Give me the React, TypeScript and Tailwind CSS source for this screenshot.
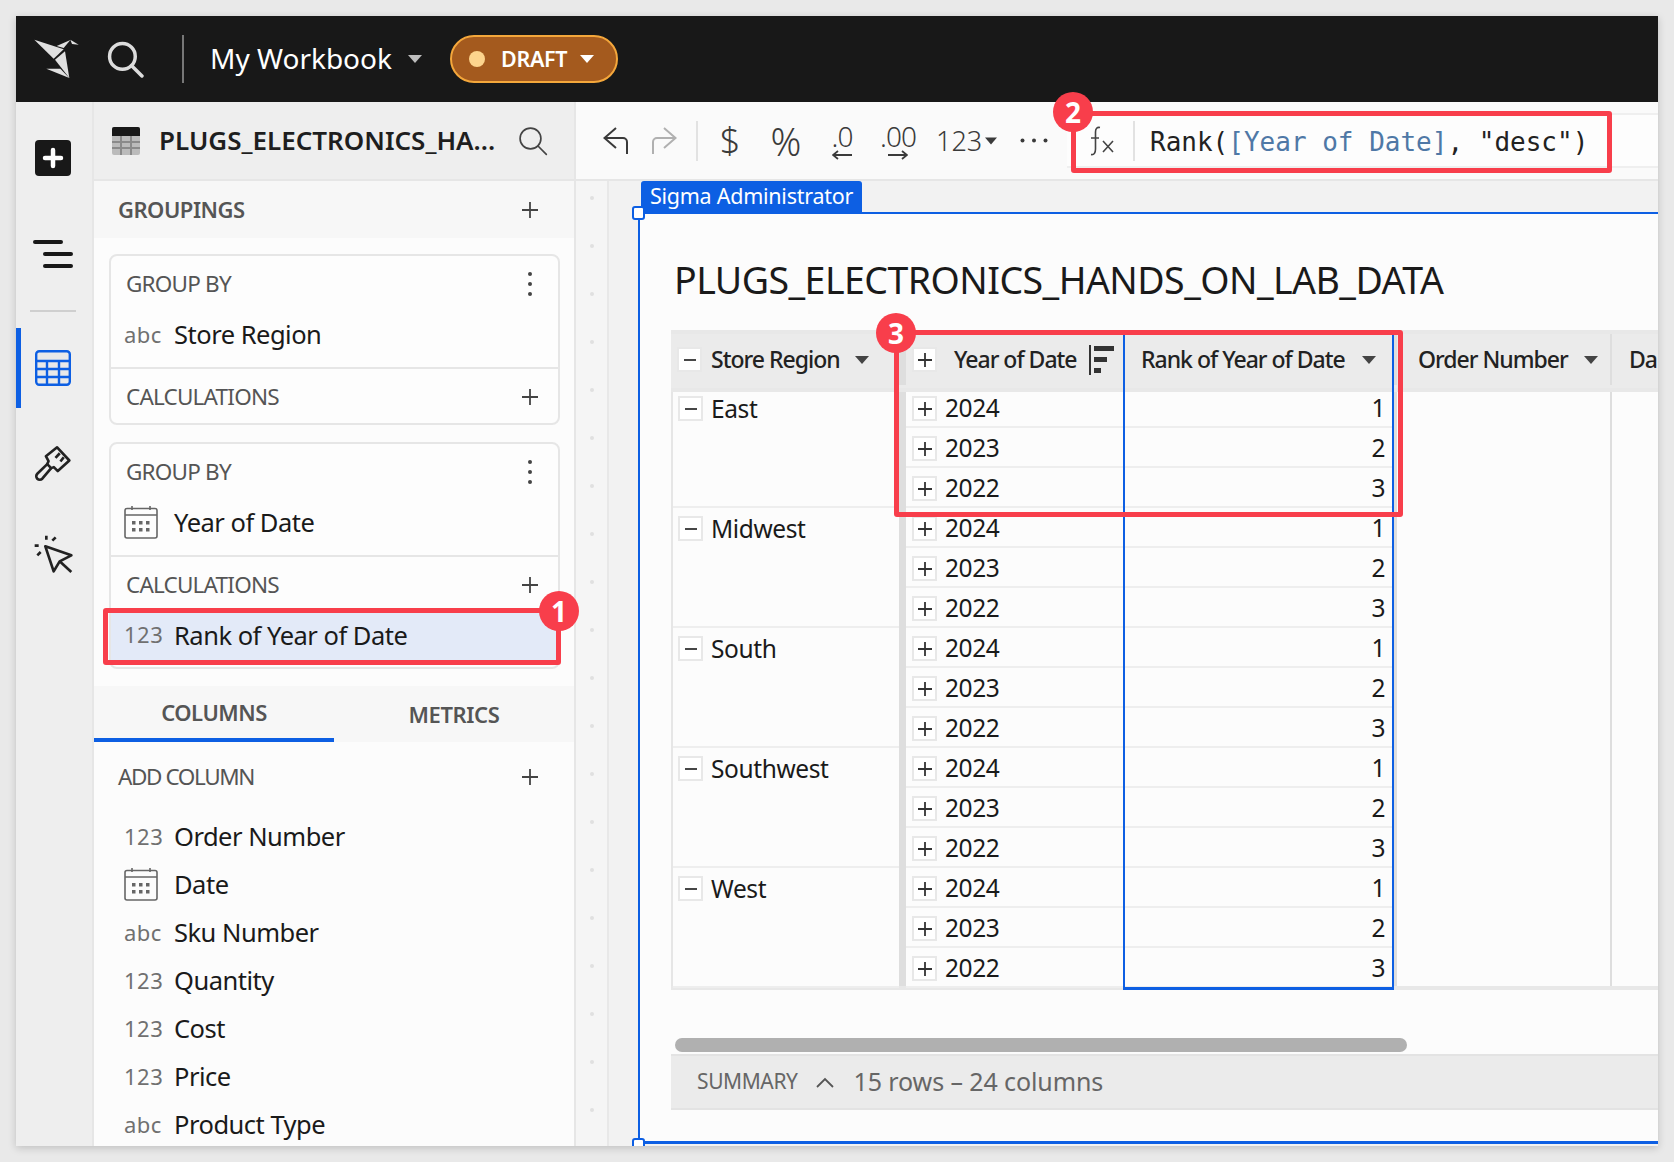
import React from "react";

const Plus = ({ c = "#444", s = 20 }: { c?: string; s?: number }) => (
  <svg width={s} height={s} viewBox="0 0 20 20" fill="none" stroke={c} strokeWidth="1.8"><path d="M10 2v16M2 10h16" /></svg>
);
const Caret = ({ c = "#444", w = 14 }: { c?: string; w?: number }) => (
  <svg width={w} height={8} viewBox="0 0 14 8" fill={c}><path d="M0 0h14L7 8z" /></svg>
);
const Dots = () => (
  <div className="flex w-[20px] justify-center">
    <svg width="6" height="26" viewBox="0 0 6 26" fill="#444"><circle cx="3" cy="3" r="2" /><circle cx="3" cy="13" r="2" /><circle cx="3" cy="23" r="2" /></svg>
  </div>
);
const Calendar = () => (
  <svg width="34" height="34" viewBox="0 0 34 34" fill="none" stroke="#666" strokeWidth="1.6">
    <rect x="1" y="3.5" width="32" height="29.5" rx="2" />
    <path d="M1 10h32M8 1v4M26 1v4" />
    <g fill="#666" stroke="none">
      <rect x="8" y="16" width="3.5" height="3.5" /><rect x="15" y="16" width="3.5" height="3.5" /><rect x="22" y="16" width="3.5" height="3.5" />
      <rect x="8" y="23" width="3.5" height="3.5" /><rect x="15" y="23" width="3.5" height="3.5" /><rect x="22" y="23" width="3.5" height="3.5" />
    </g>
  </svg>
);
const Logo = () => (
  <svg width="50" height="44" viewBox="20 25 150 132" fill="#e0e0e0">
    <polygon points="30,33 118,62 88,90" />
    <polygon points="97,52 138,34 118,58" />
    <polygon points="138,33 163,48 143,46" />
    <polygon points="92,93 122,68 135,148" />
    <polygon points="66,120 108,120 135,148" />
  </svg>
);
const Search = ({ c, w, s }: { c: string; w: number; s: number }) => (
  <svg width={s} height={s} viewBox="0 0 36 36" fill="none" stroke={c} strokeWidth={w} strokeLinecap="round">
    <circle cx="15" cy="15" r="12.5" /><path d="M24 24l10 10" />
  </svg>
);
const Brush = () => (
  <svg width="38" height="38" viewBox="40 315 115 115" fill="none" stroke="#222" strokeWidth="8" strokeLinejoin="round">
    <path d="M110 325 L147 365 L112 397 L100 385 L92 388 L80 376 L84 367 L76 352 Z" />
    <path d="M80 376 L50 405 a10 10 0 0 0 15 15 L92 388" />
    <path d="M118 343 L105 357 M130 355 L120 368" />
  </svg>
);
const CursorClick = () => (
  <svg width="40" height="40" viewBox="35 598 120 120" fill="none" stroke="#222" strokeWidth="8">
    <path d="M72 635 L150 662 L115 680 L97 710 Z" strokeLinejoin="round" />
    <path d="M115 680 L150 712" />
    <path d="M75 603 V615 M40 633 H52 M48 662 L58 652 M103 608 L93 618" />
  </svg>
);
const TableIcon = () => (
  <svg width="36" height="36" viewBox="0 0 36 36">
    <rect x="1.2" y="1.2" width="33.6" height="33.6" rx="3" fill="#e9e9e9" stroke="#0d5fe3" strokeWidth="2.4" />
    <path d="M1 11h34M1 19h34M1 27h34M12 11v24M24 11v24" stroke="#0d5fe3" strokeWidth="2.4" />
  </svg>
);
const PanelTable = () => (
  <svg width="28" height="28" viewBox="0 0 28 28">
    <rect width="28" height="28" rx="2" fill="#bbb" />
    <path d="M0 2a2 2 0 0 1 2-2h24a2 2 0 0 1 2 2v7H0z" fill="#181818" />
    <path d="M0 15h28M0 21h28M9 9v19M19 9v19" stroke="#8a8a8a" strokeWidth="2" />
  </svg>
);
const Undo = ({ c, flip }: { c: string; flip?: boolean }) => (
  <svg width="26" height="28" viewBox="0 0 26 28" fill="none" stroke={c} strokeWidth="2" className={flip ? "-scale-x-100" : ""}>
    <path d="M13 1L1.5 11 13 21M1.5 11H20a4 4 0 0 1 4 4v12" />
  </svg>
);
const Fx = () => (
  <svg width="26" height="30" viewBox="0 0 26 30" fill="none" stroke="#444" strokeWidth="1.6">
    <path d="M11 1.5C8 1 6.5 2.5 6.5 6V23C6.5 27 5 29 2 28.5M2 12H10" />
    <path d="M14 15L24 26M24 15L14 26" />
  </svg>
);
const Badge = ({ n, cls }: { n: number; cls: string }) => (
  <div className={"absolute z-30 flex h-[40px] w-[40px] items-center justify-center rounded-full bg-[#f83e4b] text-[28px] font-bold leading-none text-white " + cls}>{n}</div>
);
const RedBox = ({ cls }: { cls: string }) => (
  <div className={"absolute z-20 rounded-[3px] border-[5px] border-[#f83e4b] " + cls} />
);
const Box = ({ minus }: { minus?: boolean }) => (
  <div className="flex h-[25px] w-[25px] shrink-0 items-center justify-center border-2 border-[#e8e8e8] bg-white">
    <svg width="14" height="14" viewBox="0 0 14 14" stroke="#333" strokeWidth="1.8"><path d={minus ? "M1 7h12" : "M7 0v14M0 7h14"} /></svg>
  </div>
);
const Item = ({ t, label, card }: { t: string; label: string; card?: boolean }) => (
  <div className="flex h-[48px] items-center">
    <div className={card ? "flex w-[63px] pl-[13px]" : "flex w-[80px] pl-[30px]"}>
      {t === "cal" ? <Calendar /> : <span className="text-[22px] tracking-[0.5px] text-[#707070]">{t}</span>}
    </div>
    <span className="text-[25.5px] tracking-[-0.5px] text-[#1a1a1a]">{label}</span>
  </div>
);
const SecHead = ({ label, icon }: { label: string; icon: React.ReactNode }) => (
  <div className="flex items-center justify-between pr-[18px]">
    <span className="text-[22.5px] tracking-[-0.8px] text-[#555]">{label}</span>
    {icon}
  </div>
);

const years = ["2024", "2023", "2022"];
const regions = ["East", "Midwest", "South", "Southwest", "West"];

export default function App() {
  return (
    <div className="relative h-[1162px] w-[1674px] overflow-hidden bg-[#e9e9e9] p-[16px] font-['Noto_Sans',sans-serif]">
      <div className="flex h-[1130px] w-[1642px] flex-col overflow-hidden bg-white shadow-[0_2px_8px_rgba(0,0,0,0.18)]">
        {/* top bar */}
        <div className="flex h-[86px] shrink-0 items-center bg-[#181818] pl-[15px]">
          <Logo />
          <div className="ml-[26px]"><Search c="#dcdcdc" w={3.4} s={37} /></div>
          <div className="ml-[38px] h-[48px] w-[2px] bg-[#777]" />
          <span className="ml-[26px] pb-[2px] text-[28px] leading-none text-white">My Workbook</span>
          <div className="ml-[16px]"><Caret c="#bdbdbd" /></div>
          <div className="ml-[28px] flex h-[48px] w-[168px] items-center rounded-full border-2 border-[#f4a73b] bg-[#a45a1e] pl-[17px]">
            <div className="h-[16px] w-[16px] rounded-full bg-[#fdd48d]" />
            <span className="ml-[16px] text-[21.5px] font-semibold tracking-[-0.3px] text-white">DRAFT</span>
            <div className="ml-[13px]"><Caret c="#fff" /></div>
          </div>
        </div>

        <div className="flex min-h-0 flex-1">
          {/* rail */}
          <div className="flex w-[78px] shrink-0 flex-col items-center border-r-2 border-[#e6e6e6] bg-[#eeeeee] pr-[2px]">
            <div className="mt-[38px] flex h-[36px] w-[36px] items-center justify-center rounded-[4px] bg-[#181818]">
              <svg width="22" height="22" viewBox="0 0 22 22" stroke="#fff" strokeWidth="4.5" strokeLinecap="round"><path d="M11 3v16M3 11h16" /></svg>
            </div>
            <div className="mt-[64px] flex flex-col items-start gap-[8px]">
              <div className="h-[4px] w-[30px] rounded-full bg-[#181818]" />
              <div className="ml-[10px] h-[4px] w-[30px] rounded-full bg-[#181818]" />
              <div className="ml-[10px] h-[4px] w-[30px] rounded-full bg-[#181818]" />
            </div>
            <div className="mt-[42px] h-[2px] w-[46px] bg-[#cfcfcf]" />
            <div className="mt-[16px] flex h-[80px] w-[76px] items-center justify-center border-l-[6px] border-[#0d5fe3] pr-[6px]"><TableIcon /></div>
            <div className="mt-[36px] flex"><Brush /></div>
            <div className="mt-[52px] flex"><CursorClick /></div>
          </div>

          {/* panel */}
          <div className="flex w-[482px] shrink-0 flex-col overflow-hidden border-r-2 border-[#e6e6e6] bg-[#fcfcfc]">
            <div className="flex h-[79px] shrink-0 items-center border-b-2 border-[#e6e6e6] bg-[#eeeeee] pl-[18px]">
              <PanelTable />
              <span className="ml-[19px] w-[349px] text-[26px] font-semibold whitespace-nowrap text-[#1e1e1e]">PLUGS_ELECTRONICS_HA...</span>
              <div className="ml-[10px]"><Search c="#444" w={2} s={30} /></div>
            </div>
            <div className="flex h-[57px] shrink-0 items-center justify-between bg-[#f7f7f7] pl-[24px] pr-[34px]">
              <span className="text-[22px] font-semibold tracking-[-0.5px] text-[#555]">GROUPINGS</span>
              <Plus />
            </div>

            <div className="ml-[15px] mt-[16px] h-[171px] w-[451px] shrink-0 rounded-[8px] border-2 border-[#e6e6e6] bg-[#fdfdfd]">
              <div className="h-[113px] border-b-2 border-[#e6e6e6] pl-[15px] pt-[11px]">
                <div className="h-[32px]"><SecHead label="GROUP BY" icon={<Dots />} /></div>
                <div className="-ml-[15px] mt-[11px]"><Item card t="abc" label="Store Region" /></div>
              </div>
              <div className="pl-[15px] pt-[11px]"><SecHead label="CALCULATIONS" icon={<Plus />} /></div>
            </div>

            <div className="ml-[15px] mt-[17px] h-[227px] w-[451px] shrink-0 rounded-[8px] border-2 border-[#e6e6e6] bg-[#fdfdfd]">
              <div className="h-[113px] border-b-2 border-[#e6e6e6] pl-[15px] pt-[11px]">
                <div className="h-[32px]"><SecHead label="GROUP BY" icon={<Dots />} /></div>
                <div className="-ml-[15px] mt-[11px]"><Item card t="cal" label="Year of Date" /></div>
              </div>
              <div className="pl-[15px] pt-[11px]"><SecHead label="CALCULATIONS" icon={<Plus />} /></div>
              <div className="mt-[9px] h-[54px] bg-[#e3eaf8]"><Item card t="123" label="Rank of Year of Date" /></div>
            </div>

            <div className="mt-[17px] flex h-[56px] shrink-0 bg-[#f7f7f7]">
              <div className="flex h-full w-[240px] items-center justify-center border-b-4 border-[#0d5fe3] text-[22px] font-semibold tracking-[-0.5px] text-[#555]">COLUMNS</div>
              <div className="flex h-full w-[240px] items-center justify-center text-[22px] font-semibold tracking-[-0.4px] text-[#555]">METRICS</div>
            </div>
            <div className="flex h-[70px] shrink-0 items-center justify-between pl-[24px] pr-[34px]">
              <span className="text-[22.5px] tracking-[-1.4px] text-[#555]">ADD COLUMN</span>
              <Plus />
            </div>
            <div>
              <Item t="123" label="Order Number" />
              <Item t="cal" label="Date" />
              <Item t="abc" label="Sku Number" />
              <Item t="123" label="Quantity" />
              <Item t="123" label="Cost" />
              <Item t="123" label="Price" />
              <Item t="abc" label="Product Type" />
            </div>
          </div>

          {/* main */}
          <div className="flex min-w-0 flex-1 flex-col">
            <div className="flex h-[79px] shrink-0 items-center border-b-2 border-[#e6e6e6] bg-[#fafafa] pl-[27px] text-[#3a3a3a]">
              <div className="flex w-[26px]"><Undo c="#3a3a3a" /></div>
              <div className="ml-[22px] flex w-[26px]"><Undo c="#b0b0b0" flip /></div>
              <div className="ml-[19px] h-[40px] w-[2px] bg-[#e2e2e2]" />
              <span className="ml-[17px] w-[30px] text-center text-[36px] font-light leading-none">$</span>
              <span className="ml-[19px] w-[44px] text-center text-[38px] font-light leading-none">%</span>
              <div className="ml-[14px] flex w-[40px] flex-col items-center">
                <span className="text-[28px] font-light leading-[28px] tracking-[-1px]">.0</span>
                <svg width="20" height="10" viewBox="0 0 20 10" fill="none" stroke="#3a3a3a" strokeWidth="1.8"><path d="M20 5H1M6 1L1 5l5 4" /></svg>
              </div>
              <div className="ml-[11px] flex w-[50px] flex-col items-center">
                <span className="text-[28px] font-light leading-[28px] tracking-[-1px]">.00</span>
                <svg width="20" height="10" viewBox="0 0 20 10" fill="none" stroke="#3a3a3a" strokeWidth="1.8"><path d="M0 5h19M14 1l5 4-5 4" /></svg>
              </div>
              <div className="ml-[13px] flex w-[70px] items-center">
                <span className="text-[27px] font-light leading-none">123</span>
                <div className="ml-[3px]"><Caret c="#3a3a3a" w={12} /></div>
              </div>
              <div className="ml-[13px] flex w-[30px] justify-center">
                <svg width="28" height="5" viewBox="0 0 28 5" fill="#3a3a3a"><circle cx="2.5" cy="2.5" r="2" /><circle cx="14" cy="2.5" r="2" /><circle cx="25.5" cy="2.5" r="2" /></svg>
              </div>
              <div className="ml-[18px] flex h-[55px] min-w-0 flex-1 items-center border-y-2 border-[#efefef] bg-[#fdfdfd]">
                <div className="flex w-[66px] justify-center pl-[4px]"><Fx /></div>
                <div className="h-[40px] w-[2px] bg-[#e2e2e2]" />
                <div className="ml-[15px] pt-[2px] font-['DejaVu_Sans_Mono',monospace] text-[26px] leading-none whitespace-pre text-[#222]">
                  Rank(<span className="text-[#4f78a6]">[Year of Date]</span>, "desc")
                </div>
              </div>
            </div>

            <div className="flex min-h-0 flex-1 bg-[#f2f2f2]">
              <div className="flex w-[33px] shrink-0 flex-col items-center gap-[44px] border-r-2 border-[#e8e8e8] bg-[#f5f5f5] pt-[15px]">
                {Array.from({ length: 20 }).map((_, i) => <div key={i} className="h-[4px] w-[4px] shrink-0 rounded-full bg-[#e0e0e0]" />)}
              </div>
              <div className="relative ml-[29px] mt-[31px] min-w-0 flex-1">
                <div className="absolute -top-[31px] left-[3px] z-10 flex h-[31px] w-[221px] items-center justify-center rounded-t-[3px] bg-[#0d5fe3] text-[21.5px] tracking-[-0.25px] text-white">Sigma Administrator</div>
                <div className="absolute -left-[6px] -top-[6px] z-10 h-[14px] w-[13px] rounded-[3px] border-2 border-[#0d5fe3] bg-white" />
                <div className="absolute -left-[6px] -bottom-[6px] z-10 h-[14px] w-[13px] rounded-[3px] border-2 border-[#0d5fe3] bg-white" />
                <div className="h-[932px] border-t-2 border-b-[3px] border-l-2 border-[#0d5fe3] bg-[#fcfcfc] pl-[31px]">
                  <div className="flex h-[116px] items-center pl-[3px] pt-[17px] text-[37.5px] tracking-[-0.55px] text-[#1a1a1a]">PLUGS_ELECTRONICS_HANDS_ON_LAB_DATA</div>

                  {/* table */}
                  <div className="relative h-[660px] overflow-hidden">
                    <div className="relative z-10 flex h-[62px] border-y-4 border-[#e8e8e8] bg-[#ebebeb] pb-[3px] text-[23px] font-medium tracking-[-1px] text-[#222]">
                      <div className="flex w-[228px] shrink-0 items-center pl-[6px]">
                        <Box minus /><span className="ml-[9px]">Store Region</span>
                        <div className="ml-[15px]"><Caret /></div>
                      </div>
                      <div className="w-[7px] shrink-0 bg-[#dedede]" />
                      <div className="flex w-[217px] shrink-0 items-center pl-[6px]">
                        <Box /><span className="ml-[17px]">Year of Date</span>
                        <div className="ml-[12px] h-[30px] w-[2px] bg-[#333]" />
                        <svg className="ml-[3px]" width="20" height="30" viewBox="0 0 20 30" fill="#333"><rect width="20" height="5" y="1" /><rect width="13" height="5" y="12" /><rect width="7" height="5" y="23" /></svg>
                      </div>
                      <div className="flex w-[270px] shrink-0 items-center pl-[18px]">
                        <span>Rank of Year of Date</span>
                        <div className="ml-[17px]"><Caret /></div>
                      </div>
                      <div className="w-[4px] shrink-0 bg-[#dedede]" />
                      <div className="flex w-[215px] shrink-0 items-center border-r-2 border-[#dedede] pl-[21px]">
                        <span>Order Number</span>
                        <div className="ml-[16px]"><Caret /></div>
                      </div>
                      <div className="flex items-center pl-[17px]"><span>Da</span></div>
                    </div>

                    <div className="-mt-[4px] flex h-[602px] border-b-4 border-[#e8e8e8] text-[24.5px] tracking-[-0.4px] text-[#1a1a1a]">
                      <div className="w-[228px] shrink-0 border-l-2 border-[#e6e6e6]">
                        {regions.map((r) => (
                          <div key={r} className="flex h-[120px] border-b-2 border-[#eeeeee] pl-[5px]">
                            <div className="flex h-[40px] items-start pt-[8px]"><Box minus /><span className="ml-[8px] leading-[25px]">{r}</span></div>
                          </div>
                        ))}
                      </div>
                      <div className="w-[7px] shrink-0 bg-[#dedede]" />
                      <div className="w-[217px] shrink-0">
                        {regions.flatMap((r) => years.map((y) => (
                          <div key={r + y} className="flex h-[40px] items-center border-b-2 border-[#eeeeee] pl-[6px] pt-[3px]"><Box /><span className="ml-[8px]">{y}</span></div>
                        )))}
                      </div>
                      <div className="w-[270px] shrink-0">
                        {regions.flatMap((r) => years.map((y, i) => (
                          <div key={r + y} className="flex h-[40px] items-center justify-end border-b-2 border-[#eeeeee] pr-[8px] pt-[3px]">{i + 1}</div>
                        )))}
                      </div>
                      <div className="w-[4px] shrink-0 bg-[#dedede]" />
                      <div className="w-[215px] shrink-0 border-r-2 border-[#dedede]" />
                    </div>
                    <div className="absolute left-[452px] top-0 z-10 h-[660px] w-[271px] border-x-2 border-b-[3px] border-[#0d5fe3]" />
                  </div>

                  <div className="ml-[4px] mt-[48px] h-[14px] w-[732px] rounded-full bg-[#b0b0b0]" />
                  <div className="mt-[2px] flex h-[56px] items-center border-y-2 border-[#e3e3e3] bg-[#ebebeb] pl-[26px] text-[#666]">
                    <span className="text-[21px] tracking-[-0.4px]">SUMMARY</span>
                    <svg className="ml-[18px]" width="18" height="11" viewBox="0 0 18 11" fill="none" stroke="#555" strokeWidth="1.8"><path d="M1 10l8-8 8 8" /></svg>
                    <span className="ml-[20px] text-[25px] tracking-[-0.1px]">15 rows – 24 columns</span>
                  </div>
                </div>
              </div>
            </div>
          </div>
        </div>
      </div>

      {/* annotations */}
      <RedBox cls="left-[103px] top-[608px] h-[57px] w-[458px]" />
      <RedBox cls="left-[1071px] top-[111px] h-[62px] w-[541px]" />
      <RedBox cls="left-[894px] top-[330px] h-[187px] w-[509px]" />
      <Badge n={1} cls="left-[539px] top-[591px]" />
      <Badge n={2} cls="left-[1053px] top-[92px]" />
      <Badge n={3} cls="left-[876px] top-[313px]" />
    </div>
  );
}
